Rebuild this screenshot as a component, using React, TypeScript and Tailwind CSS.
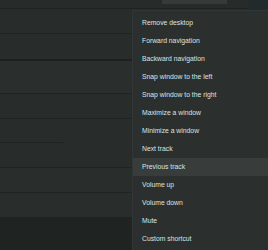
import React from "react";

const items = [
  "Remove desktop",
  "Forward navigation",
  "Backward navigation",
  "Snap window to the left",
  "Snap window to the right",
  "Maximize a window",
  "Minimize a window",
  "Next track",
  "Previous track",
  "Volume up",
  "Volume down",
  "Mute",
  "Custom shortcut",
];

export default function App() {
  return (
    <div className="relative h-[250px] w-[268px] overflow-hidden bg-[#272c2a] font-['Liberation_Sans',sans-serif]">
      {/* background list rows */}
      <div className="flex h-full flex-col">
        <div className="h-[8px] shrink-0 bg-[#272c2a]" />
        <div className="h-[1px] shrink-0 bg-[#1f2321]" />
        <div className="h-[24px] shrink-0 bg-[#282d2b]" />
        <div className="h-[1px] shrink-0 bg-[#1f2321]" />
        <div className="h-[25px] shrink-0 bg-[#282d2b]" />
        <div className="h-[2px] shrink-0 bg-[#1c201e]" />
        <div className="h-[32px] shrink-0 bg-[#2a2f2d]" />
        <div className="h-[1px] shrink-0 bg-[#1f2321]" />
        <div className="h-[24px] shrink-0 bg-[#282d2b]" />
        <div className="h-[1px] shrink-0 bg-[#1f2321]" />
        <div className="h-[23px] shrink-0 bg-[#282d2b]" />
        <div className="h-[1px] w-[63px] shrink-0 bg-[#1f2321]" />
        <div className="h-[24px] shrink-0 bg-[#282d2b]" />
        <div className="h-[1px] shrink-0 bg-[#1f2321]" />
        <div className="h-[24px] shrink-0 bg-[#292e2c]" />
        <div className="h-[1px] shrink-0 bg-[#1f2321]" />
        <div className="h-[24px] shrink-0 bg-[#292e2c]" />
        <div className="flex-1 bg-[#1f2321]" />
      </div>

      {/* top-right chrome */}
      <div className="absolute left-[162px] top-0 h-[4px] w-[65px] bg-[#363b3a]" />
      <div className="absolute left-[248px] top-0 h-[11px] w-[20px] bg-[#232a2c]" />

      {/* context menu */}
      <div className="absolute left-[132px] top-[10px] bottom-0 right-0 border-l border-t border-[#323736] bg-[#2b302f] pt-[3px]">
        {items.map((label) => (
          <div
            key={label}
            className={
              label === "Previous track"
                ? "flex h-[18px] items-center bg-[#383d3c] pl-[9px] text-[6.8px] text-[#dde1e0]"
                : "flex h-[18px] items-center pl-[9px] text-[6.8px] text-[#dde1e0]"
            }
          >
            {label}
          </div>
        ))}
      </div>
    </div>
  );
}
